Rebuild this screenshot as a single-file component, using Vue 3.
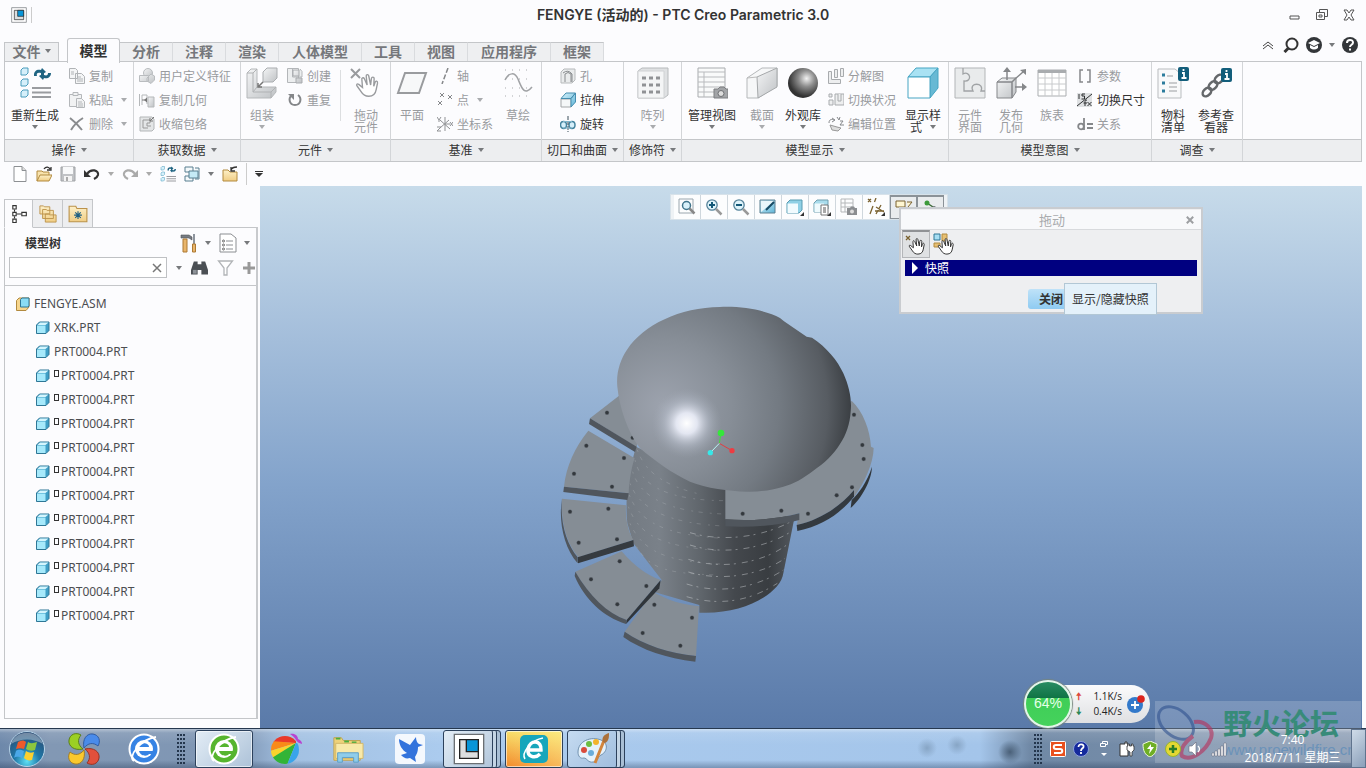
<template>
  <div class="app">
    <svg class="sprite" aria-hidden="true">
      <defs>
        <linearGradient id="g-cube" x1="0" y1="0" x2="1" y2="1"><stop offset="0" stop-color="#d8f3fc" /><stop offset="1" stop-color="#5fb4d6" /></linearGradient>
        <linearGradient id="g-gray" x1="0" y1="0" x2="1" y2="1"><stop offset="0" stop-color="#f4f5f6" /><stop offset="1" stop-color="#bfc2c5" /></linearGradient>
        <linearGradient id="g-folder" x1="0" y1="0" x2="0" y2="1"><stop offset="0" stop-color="#fdf0c8" /><stop offset="1" stop-color="#f0cd84" /></linearGradient>
        <radialGradient id="g-ball" cx=".62" cy=".35" r=".6"><stop offset="0" stop-color="#f2f2f2" /><stop offset=".45" stop-color="#8d8d8d" /><stop offset="1" stop-color="#333" /></radialGradient>
        <radialGradient id="g-orb" cx=".5" cy=".85" r=".8"><stop offset="0" stop-color="#5fe0f5" /><stop offset=".45" stop-color="#1f78a8" /><stop offset="1" stop-color="#2a4d75" /></radialGradient>
        <clipPath id="c-round"><circle cx="15" cy="17" r="14" /></clipPath>
      </defs>
      <symbol id="hand" viewBox="0 0 20 20"><path d="M6 12 3 9.500C1.500 8.500 .8 9.800 1.800 11L5 15.500C6.500 18 8.500 19 11 19c4 0 5.500-2.500 6-5.500l1-5c.3-1.800-1.500-2.200-2-.5l-1 3 .3-6c0-1.800-2-1.800-2.200 0L12.500 10 11 2.800c-.4-1.700-2.300-1.300-2 .4L9.700 10 7.500 5C6.800 3.500 5 4.200 5.500 5.800z" fill="#fff" stroke="currentColor" stroke-width="1.100" /></symbol>
      <symbol id="regen" viewBox="0 0 32 32">
        <g fill="#d5effa" stroke="#4b9cbc"><path d="M2 3l2-2h5v5l-2 2H2zM2 14l2-2h5v5l-2 2H2zM2 25l2-2h5v5l-2 2H2z" /></g>
        <path d="M13 21h19M13 25.500h19M13 30h19" stroke="#9a9ca0" stroke-width="2" />
        <path d="M15 8c0-4 3-6 7-5l1-2 4 4-5 3V6c-3-1-5 0-4 3h-3zM32 6c0 4-3 6-7 5l-1 2-4-4 5-3v2c3 1 4 0 4-2z" fill="#1f6482" />
      </symbol>
      <symbol id="copy" viewBox="0 0 16 16"><g fill="#f4f5f6" stroke="#b0b3b6"><path d="M.5.500h6l2 2v8h-8zM6.500 5.500h6l3 3v7h-9z" /><path d="M2 4h3M2 6h3M8 9h4M8 11h6M8 13h6" /></g></symbol>
      <symbol id="paste" viewBox="0 0 16 16"><g fill="#f1f2f3" stroke="#b4b7ba"><path d="M.5 2.500h12v12H.5z" /><path d="M4 .5h5v3H4zM7.500 6.500h5l3 3v6h-8z" /><path d="M9 10h4M9 12h5M9 14h5" /></g></symbol>
      <symbol id="delete" viewBox="0 0 16 16"><path d="M1 2c4 3 8 7 12 12M14 2C9 5 5 9 2 14" stroke="#8a8c8f" stroke-width="2" fill="none" /></symbol>
      <symbol id="udf" viewBox="0 0 16 16"><g fill="url(#g-gray)" stroke="#b9bcbf"><circle cx="9" cy="5" r="4.500" /><path d="M.5 7.500h9v6h-9zM8 10l4-4 3.500 2v4L12 15.500 8 13z" /></g></symbol>
      <symbol id="copygeom" viewBox="0 0 16 16"><path d="M9 5h6v10H9z" fill="url(#g-gray)" stroke="#b5b8ba" /><path d="M.5 2v12M3 13V3h5v9" fill="none" stroke="#b5b8ba" /><path d="M3 8h5" stroke="#777" /><path d="M8 5.500v5L5 8z" fill="#777" /></symbol>
      <symbol id="shrink" viewBox="0 0 16 16"><path d="M1 1h12l2 2v10l-2 2H1z" fill="#e4e6e7" stroke="#b3b6b8" /><path d="M4 4h7v3H8v3h4M4 4v8h5" fill="none" stroke="#999" /><path d="M15 1 11 5m0-3v3h3" stroke="#777" fill="none" /></symbol>
      <symbol id="assemble" viewBox="0 0 32 32"><path d="M1 6l4-4h6v18h19v5l-5 6H1z" fill="url(#g-gray)" stroke="#b5b8ba" /><path d="M1 6h6v19h18v6M7 6l4-4M25 25l5-5M7 25l4-5" fill="none" stroke="#b0b2b4" /><path d="M17 5l4-4h10v10l-4 4H17z" fill="url(#g-gray)" stroke="#aaadb0" /><path d="M17 15l-5 5m0-4v4h4" stroke="#777" fill="none" stroke-width="1.500" /></symbol>
      <symbol id="create" viewBox="0 0 16 16"><path d="M.5.500h11v14H.5zM5.500.500V9H15V3.500l-2-2.500" fill="#eceeef" stroke="#b3b6b9" /><path d="M6 2h6v6H6zM9 10h6v5H9z" fill="url(#g-gray)" stroke="#a8abae" /></symbol>
      <symbol id="repeat" viewBox="0 0 16 16"><path d="M5 3C1 6 2 13 8 13s7-7 3-10" fill="none" stroke="#85878a" stroke-width="2" /><path d="M1 2h6v6z" fill="#85878a" /></symbol>
      <symbol id="drag" viewBox="0 0 32 32"><path d="M1 2l9 9M10 2 1 11" stroke="#999b9e" stroke-width="2" /><svg x="5" y="5" width="25" height="26" color="#999b9e"><use href="#hand" /></svg></symbol>
      <symbol id="plane" viewBox="0 0 32 32"><path d="M9 6h21l-7 20H2z" fill="#f7f8f9" stroke="#999b9e" stroke-width="2" /></symbol>
      <symbol id="axis" viewBox="0 0 16 16"><path d="M11 0 5 16" stroke="#85878a" stroke-width="1.500" stroke-dasharray="5 2" /></symbol>
      <symbol id="points" viewBox="0 0 16 16"><path d="M3 1l4 4m0-4L3 5M11 3l4 4m0-4-4 4M1 9l4 4m0-4-4 4" stroke="#85878a" /></symbol>
      <symbol id="csys" viewBox="0 0 16 16"><path d="M8 1v14M3 4l10 9M3 12 12 4M8 8h5M0 1l2 3 2-3M2 4v2M0 11h4l-4 4h4M13 6l3 4m0-4-3 4" stroke="#8f9194" fill="none" /></symbol>
      <symbol id="sketch" viewBox="0 0 32 32"><path d="M3 3h27M3 12h27M3 21h27M3 29h27" stroke="#a8aaad" stroke-dasharray="1 6" /><path d="M3 13C7 5 13 5 16 12s6 18 14 8" fill="none" stroke="#a0a2a5" stroke-width="1.500" /></symbol>
      <symbol id="hole" viewBox="0 0 16 16"><path d="M1 4l3-3h11v11l-3 3H1z" fill="#e9ebec" stroke="#b6b9bb" /><path d="M5 14V6q3-3 6 0v8M3 5q5-4 9 1v8" fill="none" stroke="#888b8e" /></symbol>
      <symbol id="extrude" viewBox="0 0 16 16"><path d="M1 7h10v8H1z" fill="#f5f7f8" stroke="#a3a6a8" /><path d="M1 6.500 6 1h9.500L11 6.500zM11 6.500 15.500 1v9L11 15z" fill="url(#g-cube)" stroke="#468eb0" /></symbol>
      <symbol id="revolve" viewBox="0 0 16 16"><g fill="#d5effa" stroke="#45849f" stroke-width="1.500"><ellipse cx="3.500" cy="9" rx="3" ry="3.500" /><ellipse cx="12" cy="9" rx="3" ry="3.500" /></g><path d="M8 0v16" stroke="#3b4f5a" stroke-dasharray="4 1" /><path d="M3 5.500h9M3 12h9" stroke="#7eb4ca" /></symbol>
      <symbol id="pattern" viewBox="0 0 32 32"><path d="M1 4l4-3h26v27l-4 3H1z" fill="#dfe1e3" stroke="#b7babc" /><path d="M1 4h26v27H1z" fill="#f4f5f6" stroke="#d0d2d4" /><path d="M5 11h18M5 18h18M5 25h18" stroke="#909295" stroke-width="3" stroke-dasharray="4 3" /></symbol>
      <symbol id="views" viewBox="0 0 32 32"><path d="M2 1h27v29H2z" fill="#f9fafa" stroke="#a9acaf" /><path d="M2 5h27M2 10h27M2 15h27M2 20h27M2 25h27M8 5v25" stroke="#b9bbbe" /><path d="M18 22h4l2-2h4l2 2h2v9H18z" fill="#a2a4a7" stroke="#7c7e81" /><circle cx="25" cy="26.500" r="3" fill="#ddd" stroke="#6d6f72" /></symbol>
      <symbol id="section" viewBox="0 0 32 32"><path d="M1 11 16 1h15v18L12 31H1z" fill="#f6f7f8" stroke="#b5b8ba" /><path d="M11 10 31 1v19L12 31z" fill="url(#g-gray)" stroke="#a5a8aa" /><path d="M1 11l10-1" stroke="#bbb" /></symbol>
      <symbol id="ball" viewBox="0 0 32 32"><circle cx="16" cy="16" r="15" fill="url(#g-ball)" /></symbol>
      <symbol id="explode" viewBox="0 0 16 16"><g fill="#edeeef" stroke="#a8abae"><path d="M.5 3.500h3v8h9v4H.5zM6.500 1.500h3v8h-3zM12.500.500h3v8h-3z" /></g></symbol>
      <symbol id="state" viewBox="0 0 16 16"><g fill="#edeeef" stroke="#a8abae"><path d="M1 2h3v3H1zM1 8h4v5H1zM7 2h9v11H7z" /><path d="M10 2v7h3V2" /></g></symbol>
      <symbol id="editpos" viewBox="0 0 16 16"><path d="M1 7c0-4 3-4 5-3M4 2l3 2-3 2M9 1l2 3 1-3M12 5h3l-3 4h4" stroke="#85878a" fill="none" /><path d="M2 9l7 2 4 1-3 3-6-1z" fill="#ddd" stroke="#999" /></symbol>
      <symbol id="display" viewBox="0 0 32 32"><path d="M1 10 9 1h22l-8 9z" fill="#a9e2f3" stroke="#46a5c3" /><path d="M23 10l8-9v20l-8 10z" fill="#67b9d4" stroke="#46a5c3" /><path d="M1 10h22v21H1z" fill="#fff" stroke="#46a5c3" /></symbol>
      <symbol id="interface" viewBox="0 0 32 32"><path d="M1 1h30v30H1z" fill="#e9ebec" stroke="#b2b5b7" /><path d="M9 1v6c7-4 10 8 1 7v10h9c-5-9 12-9 8 0h4" fill="none" stroke="#a0a3a5" stroke-width="1.300" /></symbol>
      <symbol id="publish" viewBox="0 0 32 32"><path d="M2 15l5-4h14v14l-4 6H2z" fill="url(#g-gray)" stroke="#85878a" /><path d="M2 15h15v16M17 15l4-4M12 13V3M20 12l8-7M20 20h8" fill="none" stroke="#85878a" stroke-width="1.500" /><path d="M12 0l4 5H8zM31 2v6l-6-5zM32 20l-5-4v8z" fill="#85878a" /></symbol>
      <symbol id="family" viewBox="0 0 32 32"><path d="M2 3h28v26H2z" fill="#fff" stroke="#aaadb0" /><path d="M2 3h28v3H2z" fill="#a9acaf" /><path d="M2 11h28M2 17h28M2 23h28M9 6v23M16 6v23M23 6v23" stroke="#c8cacc" /></symbol>
      <symbol id="params" viewBox="0 0 16 16"><path d="M6 2H3v12h3M10 2h3v12h-3" fill="none" stroke="#85878a" stroke-width="1.500" /></symbol>
      <symbol id="dims" viewBox="0 0 16 16"><path d="M0 1h15v14H0z" fill="#dfe1e3" /><path d="M2 2v5M8 2H5v2h2.500v3H4.500M0 14 15 2M8 14V9.500q0-1.500 2-1.500M6.500 11H10M10.500 10l4 4m0-4-4 4" fill="none" stroke="#2d2f31" /></symbol>
      <symbol id="relation" viewBox="0 0 16 16"><path d="M7 2v12M10 8h6M10 12h6" fill="none" stroke="#85878a" stroke-width="1.800" /><circle cx="4" cy="10.500" r="2.800" fill="none" stroke="#85878a" stroke-width="1.800" /></symbol>
      <symbol id="bom" viewBox="0 0 32 32"><path d="M1 2h17l6 5v24H1z" fill="#f8f9fa" stroke="#b9bcbf" /><path d="M5 8h3M5 16h3M5 24h3" stroke="#2b7c9d" stroke-width="3" /><path d="M10 9h6M12 16h8M12 20h8M12 24h8" stroke="#9a9da0" /><rect x="21" width="11" height="14" rx="2" fill="#135e7b" /><path d="M26.500 2v2M25 6h2v5M24.500 11h5" stroke="#fff" stroke-width="1.800" fill="none" /></symbol>
      <symbol id="chain" viewBox="0 0 32 32"><g fill="none" stroke="#65686b" stroke-width="2.500"><ellipse cx="7" cy="25" rx="5" ry="3.500" transform="rotate(-45 7 25)" /><ellipse cx="13" cy="18.500" rx="5" ry="3.500" transform="rotate(-45 13 18.500)" /><ellipse cx="19" cy="12" rx="5" ry="3.500" transform="rotate(-45 19 12)" /></g><rect x="21" y="1" width="11" height="14" rx="2" fill="#135e7b" /><path d="M26.500 3v2M25 7h2v5M24.500 12h5" stroke="#fff" stroke-width="1.800" fill="none" /></symbol>
      <symbol id="new" viewBox="0 0 16 16"><path d="M2 .5h8l4 4v11H2z" fill="#fff" stroke="#8d9093" /><path d="M10 .5v4h4" fill="#ddd" stroke="#8d9093" /></symbol>
      <symbol id="open" viewBox="0 0 16 16"><path d="M1 15V5h5l1 1h6v3" fill="#f8e3ad" stroke="#b28a3f" /><path d="M1 15l3-6h12l-3 6z" fill="url(#g-folder)" stroke="#b28a3f" /><path d="M8 3c2-3 5-2 6 0m1-2v3h-4" fill="none" stroke="#333" stroke-width="1.300" /></symbol>
      <symbol id="save" viewBox="0 0 16 16"><path d="M1 1h14v14H1z" fill="#c0c2c5" stroke="#a0a3a6" /><path d="M3 1h10v7H3z" fill="#f8f9fa" /><path d="M4 10h8v5H4z" fill="#f4f4f4" /><path d="M6 11h2v4H6z" fill="#aaa" /></symbol>
      <symbol id="undo" viewBox="0 0 16 16"><path d="M3 8c4-6 12-4 11 1-.5 2-2 3-4 4" fill="none" stroke="currentColor" stroke-width="2.200" /><path d="M0 4v7h7z" fill="currentColor" /></symbol>
      <symbol id="windows" viewBox="0 0 16 16"><g fill="#f4f9fb" stroke="#587f90"><path d="M1 1h8v5H1zM1 10h8v5H1zM11 2h4v11h-4" /><path d="M5 5h9v7H5z" fill="#c5eaf6" /></g></symbol>
      <symbol id="closewin" viewBox="0 0 16 16"><path d="M1 15V4h5l2 2h7v9z" fill="url(#g-folder)" stroke="#b28a3f" /><path d="M9 4c1-3 4-3 6-3M9 1v4h4" fill="none" stroke="#333" stroke-width="1.300" /></symbol>
      <symbol id="treeicon" viewBox="0 0 16 16"><g fill="#fff" stroke="#333"><path d="M4 4v2M4 10v2M6 8h4" /><path d="M2.500 .5h3v3h-3zM2.500 6.500h3v3h-3zM2.500 12.500h3v3h-3zM10.500 6.500h4v3h-4z" /></g></symbol>
      <symbol id="folders" viewBox="0 0 20 20"><g fill="url(#g-folder)" stroke="#bb924a"><path d="M1 10V1h4l1 1h6v8zM4 15V5h4l1 1h7v9zM7 19v-9h4l1 1h7v8z" /></g></symbol>
      <symbol id="favs" viewBox="0 0 18 16"><path d="M1 15V1h6l1 2h9v12z" fill="url(#g-folder)" stroke="#bb924a" /><path d="M9 5.500v7M5.500 9h7M6.500 6.500l5 5M11.500 6.500l-5 5" stroke="#1d5f83" /></symbol>
      <symbol id="tools" viewBox="0 0 18 20"><path d="M1 2h8l3 2v3l-3-2H1z" fill="#777c82" stroke="#4d5157" stroke-width=".6" /><path d="M3 6h4v13H3z" fill="#e9b56b" stroke="#ac7933" /><path d="M14 1v11" stroke="#68727c" stroke-width="1.500" /><path d="M12.500 11h3v8h-3z" fill="#e9b56b" stroke="#ac7933" /></symbol>
      <symbol id="listset" viewBox="0 0 18 20"><path d="M1 1h11l5 4v14H1z" fill="#fff" stroke="#8b8e92" /><path d="M7 8h7M7 12h7M7 16h7" stroke="#8b8e92" /><g fill="none" stroke="#666"><circle cx="4.500" cy="8" r="1" /><circle cx="4.500" cy="12" r="1" /><circle cx="4.500" cy="16" r="1" /></g></symbol>
      <symbol id="binoc" viewBox="0 0 18 16"><path d="M3 1h4v3h4V1h4l3 9v5h-7v-5H7v5H0v-5z" fill="#4b4f54" /><path d="M2 10h4v4H2z" fill="#8d9298" /></symbol>
      <symbol id="filter" viewBox="0 0 16 16"><path d="M1 1h14L9.500 8v7h-3V8z" fill="#fff" stroke="#b1b4b7" stroke-width="1.300" /></symbol>
      <symbol id="part" viewBox="0 0 14 14"><path d="M.5 4l3-3h9.500v8.500l-3 3H.5z" fill="#3f9fc6" stroke="#2f7796" /><path d="M1 4.500h8.500V12H1z" fill="#a6e9fb" /><path d="M1.500 4 4 1.500h8.500L9.500 4z" fill="#d4f5fd" /></symbol>
      <symbol id="asm" viewBox="0 0 14 14"><path d="M.5 3.500 3 1h10v9l-3 3.500H.5z" fill="#f7d68d" stroke="#b28a3f" /><path d="M4.500 2.500 6 1h7v8l-1 1H4.500z" fill="#8adcf4" stroke="#2f7796" /></symbol>
      <symbol id="zoomfit" viewBox="0 0 18 18"><path d="M1 1h14v14H1z" fill="none" stroke="#9aa6ae" /><circle cx="8.500" cy="7.500" r="4" fill="#d9f1fa" stroke="#41758c" stroke-width="1.500" /><path d="M11.500 10.500l5 5" stroke="#888" stroke-width="2.500" /></symbol>
      <symbol id="zoomin" viewBox="0 0 18 18"><circle cx="7" cy="7" r="5.200" fill="#dff4fb" stroke="#56839a" stroke-width="1.300" /><path d="M4 7h6M7 4v6" stroke="#125878" stroke-width="2" /><path d="M11 11l5.500 5.500" stroke="#999" stroke-width="2.500" /></symbol>
      <symbol id="zoomout" viewBox="0 0 18 18"><circle cx="7" cy="7" r="5.200" fill="#dff4fb" stroke="#56839a" stroke-width="1.300" /><path d="M4 7h6" stroke="#125878" stroke-width="2" /><path d="M11 11l5.500 5.500" stroke="#999" stroke-width="2.500" /></symbol>
      <symbol id="repaint" viewBox="0 0 18 18"><path d="M1 2h15v13H1z" fill="url(#g-cube)" stroke="#5b7f90" /><path d="M2 14V3h13z" fill="#e9f6fa" /><path d="M7 12l8-8" stroke="#174a63" stroke-width="2" /></symbol>
      <symbol id="shade" viewBox="0 0 18 18"><path d="M1 5l3-3h12v10l-3 3H1z" fill="#8fd0e5" stroke="#579ab0" /><path d="M1.500 5.500H12V15H1.500z" fill="#f1fbfe" /><path d="M18 14v4h-4z" fill="#333" /></symbol>
      <symbol id="saved" viewBox="0 0 18 18"><path d="M1 5l3-3h11v9l-3 3H1z" fill="#a9dcec" stroke="#6f9fb0" /><path d="M1.500 5.500H11V14H1.500z" fill="#eefafd" /><path d="M8 7h7v10H8z" fill="#fff" stroke="#777" /><path d="M10 10h3M10 12h3M10 14h3" stroke="#555" /><path d="M18 14v4h-4z" fill="#333" /></symbol>
      <symbol id="snap" viewBox="0 0 18 18"><path d="M1 1h12v13H1zM1 5h12M1 9h12M5 1v13" fill="none" stroke="#b5b8ba" /><path d="M7 10h3l1-1.500h3L15 10h2v7H7z" fill="#8b8e91" /><circle cx="12" cy="13.500" r="2" fill="#ddd" /></symbol>
      <symbol id="datum" viewBox="0 0 18 18"><path d="M1 1l3 3m0-3L1 4M9 0 7.500 4M6 8 3 16M14 7l-5 9M9 9l8 5M8 13h9" stroke="#7a6230" stroke-width="1.300" /><path d="M18 14v4h-4z" fill="#333" /></symbol>
      <symbol id="annot" viewBox="0 0 18 18"><path d="M1 2h9v6H1zM12 3h5l-4 5" fill="#fff7d2" stroke="#7a6230" /></symbol>
      <symbol id="spin" viewBox="0 0 18 18"><path d="M5 4l6 4" stroke="#3b6b37" stroke-width="1.500" /><circle cx="5" cy="4" r="2.500" fill="#3c9a3b" /><circle cx="12" cy="9" r="2" fill="#6c7377" /></symbol>
      <symbol id="creo" viewBox="0 0 24 24"><path d="M1 1h22v22H1z" fill="#fff" stroke="#6b6f73" /><path d="M5 5h14v14H5z" fill="#dcdedf" stroke="#222" /><path d="M10 5h9v9h-9z" fill="#0895d8" stroke="#222" /></symbol>
      <symbol id="clover" viewBox="0 0 32 32">
        <path id="petal" d="M15 16C6 18 0 13 1 7 2 1 8-1 13 2 9 7 10 12 15 16z" fill="#9bcf24" stroke="#5c7f1c" />
        <path d="M15 16C6 18 0 13 1 7 2 1 8-1 13 2 9 7 10 12 15 16z" transform="rotate(90 16 16)" fill="#4a8bea" stroke="#315ca2" />
        <path d="M15 16C6 18 0 13 1 7 2 1 8-1 13 2 9 7 10 12 15 16z" transform="rotate(180 16 16)" fill="#e2503c" stroke="#993425" />
        <path d="M15 16C6 18 0 13 1 7 2 1 8-1 13 2 9 7 10 12 15 16z" transform="rotate(270 16 16)" fill="#fbc82d" stroke="#a17d2b" />
      </symbol>
      <symbol id="ie" viewBox="0 0 32 32"><circle cx="16" cy="16" r="14.500" fill="currentColor" stroke="#fff" stroke-width="2" /><circle cx="16" cy="16" r="9" fill="#fff" /><path d="M11 14c0-5 10-5 10 0zM11 18h15v3h-5c-2 3-9 2-10-3z" fill="currentColor" /><path d="M6 28C-1 24 13 6 28 4" fill="none" stroke="#fff" stroke-width="1.800" /></symbol>
      <symbol id="rainbow" viewBox="0 0 32 32">
        <g clip-path="url(#c-round)"><path d="M26 10 0 9V0h26z" fill="#e9392a" /><path d="M26 10 0 8v10z" fill="#f98a18" /><path d="M26 10 0 18v9z" fill="#fbd32c" /><path d="M26 10 0 26v6h17z" fill="#33b437" /><path d="M26 10 17 32h15V10z" fill="#3aa4ea" /></g>
        <path d="M20 1c5-1 8 2 8 5 3 1 4 3 4 5-3-1-5-2-6-4s-3-4-6-6z" fill="#b943d1" />
      </symbol>
      <symbol id="explorer" viewBox="0 0 34 32"><path d="M2 28V4h8l2 3h18v21z" fill="#eed27a" stroke="#bfa150" /><path d="M4 5h5M13 8h5M21 9h5" stroke="#4cae3e" stroke-width="2" /><path d="M4 10h29v16H4z" fill="#f8e9a9" stroke="#d2b666" /><path d="M6 30V20h22v10h-5v-5H11v5z" fill="#8fcdea" stroke="#5b9dc5" /></symbol>
      <symbol id="bird" viewBox="0 0 32 32"><rect x="1" y="1" width="30" height="30" rx="4" fill="#f4f8fd" /><path d="M5 6l11 6 6-8c0 3 1 6 3 7l4 1-5 2c0 6-2 8-3 10l1 5-6-4c-4 1-6 0-9-3l6-2C8 17 5 12 5 6z" fill="#3373dc" /></symbol>
      <symbol id="e360" viewBox="0 0 32 32"><rect x="2" y="2" width="28" height="28" rx="5" fill="#16a6bb" /><path d="M10 17h13c1-10-11-11-13-1-1 8 7 10 12 5" fill="none" stroke="#fff" stroke-width="3.500" /><path d="M7 26C3 20 13 7 25 5" fill="none" stroke="#fff" stroke-width="1.500" /></symbol>
      <symbol id="paint" viewBox="0 0 32 32"><path d="M1 19C1 8 14 3 24 7c9 4 5 13 0 15-4 2-3 7-8 7-5 1-6-4-9-4-4 1-6-2-6-6z" fill="#e6f2fb" stroke="#7191ae" /><circle cx="7" cy="17" r="3" fill="#d94b3c" /><circle cx="12" cy="11" r="3" fill="#6dbd42" /><circle cx="19" cy="9" r="3" fill="#f3b42c" /><circle cx="14" cy="20" r="3" fill="#6badd9" /><path d="M28 5 18 30" stroke="#d2853d" stroke-width="3" /><path d="M26 9c-2-5 2-8 6-9 0 4 0 8-4 10z" fill="#ab713c" /></symbol>
    </svg>

    <header class="titlebar">
      <div class="title-left"><svg class="icon"><use href="#creo" /></svg></div>
      <h1>FENGYE (活动的) - PTC Creo Parametric 3.0</h1>
      <div class="window-buttons">
        <button aria-label="最小化"><svg viewBox="0 0 12 12"><path d="M1 7h9v3H1z" /></svg></button>
        <button aria-label="还原"><svg viewBox="0 0 12 12"><path d="M3.500 3V.5h8v7H9M.5 3.500h8v7h-8zM3 6h3v2H3z" /></svg></button>
        <button aria-label="关闭窗口"><svg viewBox="0 0 12 12"><path d="M1 1h3l2 3 2-3h3L8 6l3 5H8L6 8l-2 3H1l3-5z" /></svg></button>
      </div>
    </header>

    <nav class="tabs">
      <button class="tab file">文件<i class="arrow"></i></button>
      <button v-for="tab in tabs" :key="tab" class="tab" :class="{ active: tab === activeTab, wide: tab.length > 2 }" @click="activeTab = tab">{{ tab }}</button>
      <div class="help">
        <button aria-label="折叠功能区"><svg viewBox="0 0 16 16"><path d="M3 9l5-4 5 4M3 12l5-4 5 4" fill="none" stroke="#444" /></svg></button>
        <button aria-label="搜索"><svg viewBox="0 0 16 16"><circle cx="9" cy="7" r="5.500" fill="none" stroke="#333" stroke-width="2" /><path d="M5.500 11 1.500 15" stroke="#333" stroke-width="3" /></svg></button>
        <button class="learn" aria-label="学习"><svg viewBox="0 0 16 16"><circle cx="8" cy="8" r="8" fill="#333639" /><path d="M2 6l6-3 6 3-6 3zM4 8v3q4 3 8 0V8L8 10z" fill="#fff" /></svg><i class="arrow"></i></button>
        <button aria-label="帮助"><svg viewBox="0 0 16 16"><circle cx="8" cy="8" r="8" fill="#333639" /><path d="M5 6c0-4 6-4 6-.5C11 8 8 7.500 8 10M8 11.500v2" fill="none" stroke="#fff" stroke-width="2" /></svg></button>
      </div>
    </nav>

    <section class="ribbon">
      <div v-for="group in groups" :key="group.name" class="group" :class="group.id">
        <div class="group-body">
          <template v-for="(block, i) in group.blocks" :key="i">
            <div v-if="block.rows" class="stack">
              <button v-for="row in block.rows" :key="row.text" class="small" :disabled="!row.on">
                <svg class="icon"><use :href="'#' + row.icon" /></svg>{{ row.text }}<i v-if="row.menu" class="arrow"></i>
              </button>
            </div>
            <span v-else-if="block.line" class="divider"></span>
            <button v-else class="large" :class="block.size" :disabled="!block.on">
              <svg><use :href="'#' + block.icon" /></svg>
              <span v-for="line in block.text" :key="line">{{ line }}<i v-if="block.inline && line === block.text[1]" class="arrow"></i></span>
              <i v-if="block.menu" class="arrow"></i>
            </button>
          </template>
        </div>
        <button class="group-name">{{ group.name }}<i class="arrow"></i></button>
      </div>
      <div class="group rest"><div class="group-body"></div><div class="group-name"></div></div>
    </section>

    <div class="quickbar">
      <button aria-label="新建"><svg class="icon"><use href="#new" /></svg></button>
      <button aria-label="打开"><svg class="icon"><use href="#open" /></svg></button>
      <button aria-label="保存"><svg class="icon"><use href="#save" /></svg></button>
      <button aria-label="撤消"><svg class="icon"><use href="#undo" /></svg></button>
      <i class="arrow pale"></i>
      <button class="redo" aria-label="重做"><svg class="icon"><use href="#undo" /></svg></button>
      <i class="arrow pale"></i>
      <button aria-label="重新生成"><svg class="icon"><use href="#regen" /></svg></button>
      <button aria-label="窗口"><svg class="icon"><use href="#windows" /></svg></button>
      <i class="arrow"></i>
      <button aria-label="关闭"><svg class="icon"><use href="#closewin" /></svg></button>
      <span class="quick-sep"></span>
      <button class="customize" aria-label="自定义快速访问工具栏"><i class="arrow"></i></button>
    </div>

    <main class="work">
      <aside class="side">
        <div class="side-tabs">
          <button class="current" aria-label="模型树"><svg><use href="#treeicon" /></svg></button>
          <button aria-label="文件夹浏览器"><svg><use href="#folders" /></svg></button>
          <button aria-label="收藏夹"><svg><use href="#favs" /></svg></button>
        </div>
        <div class="panel">
          <div class="panel-head">
            <div class="head-row">
              <h2>模型树</h2>
              <button aria-label="设置"><svg><use href="#tools" /></svg><i class="arrow"></i></button>
              <button aria-label="显示"><svg><use href="#listset" /></svg><i class="arrow"></i></button>
            </div>
            <div class="head-row search-row">
              <div class="search">
                <input v-model="query" type="text" aria-label="搜索模型树">
                <button aria-label="清除" @click="query = ''"><svg viewBox="0 0 10 10"><path d="M1 1l8 8M9 1 1 9" stroke="#777" stroke-width="1.500" /></svg></button>
              </div>
              <i class="arrow"></i>
              <button aria-label="查找"><svg><use href="#binoc" /></svg></button>
              <button aria-label="过滤"><svg><use href="#filter" /></svg></button>
              <button aria-label="添加"><svg class="plus" viewBox="0 0 12 12"><path d="M6 0v12M0 6h12" stroke="#999" stroke-width="3" /></svg></button>
            </div>
          </div>
          <ul class="tree">
            <li class="root"><svg><use href="#asm" /></svg>FENGYE.ASM</li>
            <li v-for="(part, i) in parts" :key="i"><svg><use href="#part" /></svg><i v-if="part.packed" class="packed"></i>{{ part.name }}</li>
          </ul>
        </div>
      </aside>

      <section class="viewport">
        <svg class="model" viewBox="0 0 1050 1140" role="img" aria-label="FENGYE">
          <defs>
            <linearGradient id="m-body" gradientUnits="userSpaceOnUse" x1="258" y1="0" x2="760" y2="0"><stop offset="0" stop-color="#737a82" /><stop offset=".2" stop-color="#7a8189" /><stop offset=".45" stop-color="#5f656b" /><stop offset=".65" stop-color="#44484d" /><stop offset=".85" stop-color="#393d41" /><stop offset="1" stop-color="#52575d" /></linearGradient>
            <radialGradient id="m-dome" gradientUnits="userSpaceOnUse" cx="370" cy="350" r="580"><stop offset="0" stop-color="#9da3ae" /><stop offset=".35" stop-color="#878e97" /><stop offset=".6" stop-color="#737a82" /><stop offset=".85" stop-color="#575c62" /><stop offset="1" stop-color="#34383c" /></radialGradient>
            <radialGradient id="m-shine" gradientUnits="userSpaceOnUse" cx="440" cy="400" r="105"><stop offset="0" stop-color="#fff" /><stop offset=".3" stop-color="#eceffa" stop-opacity=".9" /><stop offset=".65" stop-color="#bcc3d0" stop-opacity=".45" /><stop offset="1" stop-color="#a0a7b2" stop-opacity="0" /></radialGradient>
          </defs>
          <path d="M288 470C262 560 255 640 262 700L280 760 365 870 340 905 478 945V968C610 975 722 910 730 850L762 690 560 590Z" fill="url(#m-body)" />
          <g fill="none" stroke="#d9dcdf" stroke-width="2">
            <g opacity=".65" stroke-dasharray="18 12 6 18">
              <path d="M450 728C560 760 680 735 752 695" /><path d="M450 765C560 800 680 770 748 728" /><path d="M445 808C560 845 680 810 740 765" /><path d="M445 846C560 880 680 845 735 805" /><path d="M440 882C560 920 670 880 730 840" /><path d="M440 920C560 955 650 920 712 880" />
            </g>
            <g opacity=".3" stroke-dasharray="6 16 12 22">
              <path d="M292 480C310 530 350 580 470 610" /><path d="M285 510C300 580 370 630 550 632" /><path d="M278 545C300 620 380 665 550 672" /><path d="M270 580C300 660 390 700 550 708" /><path d="M268 615C300 700 380 735 550 745" /><path d="M265 650C300 745 380 770 540 782" /><path d="M270 700C310 790 390 815 540 822" /><path d="M290 770C330 840 390 850 530 855" />
            </g>
          </g>
          <g fill="#858d95">
            <path d="M240 315 150 385 290 472 300 420Z" />
            <path d="M145 422C105 470 78 530 72 590L266 610C268 570 275 530 284 505Z" />
            <path d="M66 626C62 700 80 760 115 802L280 750C262 720 256 680 258 646Z" />
            <path d="M106 845 245 784C285 830 320 855 362 870L260 990C200 970 150 920 106 845Z" />
            <path d="M340 905C380 930 430 945 477 948L468 1098C390 1090 310 1065 254 1025Z" />
            <path d="M556 590V688C640 695 720 685 778 670L770 705C840 690 900 650 942 600L942 622C975 575 1000 520 1001 474L993 470C990 420 970 365 935 332L850 450Z" />
          </g>
          <g fill="#50565d">
            <path d="M150 385 290 470 285 486 147 402Z" /><path d="M72 590 266 610 262 630 70 606Z" /><path d="M113 802 280 750 282 769 114 820Z" fill="#363b40" /><path d="M260 990 362 870 358 895 258 1002Z" fill="#30353a" /><path d="M66 626C60 700 80 762 113 802V820C70 770 55 690 66 626Z" /><path d="M106 845C150 920 200 968 260 990L258 1002C190 980 135 930 104 858Z" /><path d="M254 1025C310 1065 390 1090 468 1098L466 1115C380 1105 305 1080 250 1041Z" />
            <path d="M556 688C640 695 720 685 778 670V690C720 705 640 714 556 709Z" /><path d="M770 705C840 690 900 650 942 600V620C900 670 850 707 772 723Z" fill="#343a40" /><path d="M996 530C980 580 955 610 935 630L932 654C965 625 995 570 996 530Z" fill="#30363b" />
          </g>
          <g fill="#33383d" stroke="#697078"><circle v-for="hole in holes" :key="hole[0]" :cx="hole[0]" :cy="hole[1]" r="6" /></g>
          <path d="M232 290C228 250 240 210 262 178C310 105 420 52 540 51C610 48 680 62 720 84L732 94 800 140 816 143C860 172 893 212 910 250C928 290 936 330 932 365C930 400 918 435 900 462C880 495 852 520 820 542C790 565 760 582 730 590C690 602 655 606 620 605C565 603 500 595 450 575C395 550 345 512 300 475C262 425 238 350 232 290Z" fill="url(#m-dome)" />
          <circle cx="440" cy="400" r="105" fill="url(#m-shine)" />
          <path d="M538 460 543 430" stroke="#3fdd3f" stroke-width="3" /><path d="M538 460 576 482" stroke="#e43c41" stroke-width="3" /><path d="M538 460 511 488" stroke="#b9f6f5" stroke-width="3" />
          <circle cx="543" cy="429" r="10" fill="#35e83a" /><circle cx="576" cy="482" r="8" fill="#ed3c42" /><circle cx="511" cy="488" r="8" fill="#35e9e9" />
        </svg>

        <div class="viewbar">
          <button v-for="item in viewTools" :key="item.icon" :aria-label="item.label" :class="{ pressed: item.pressed }"><svg><use :href="'#' + item.icon" /></svg></button>
        </div>

        <div class="dialog" role="dialog" aria-labelledby="drag-title">
          <div class="dialog-title"><span id="drag-title">拖动</span><button aria-label="关闭拖动"><svg viewBox="0 0 10 10"><path d="M1 1l8 8M9 1 1 9" stroke="#9d9fa2" stroke-width="2.500" /></svg></button></div>
          <div class="dialog-tools">
            <button class="pressed" aria-label="点拖动"><svg viewBox="0 0 22 22"><path d="M1 2l4 4m0-4L1 6" stroke="#7a6230" stroke-width="1.300" /><svg x="3" y="3" width="18" height="18"><use href="#hand" /></svg></svg></button>
            <button aria-label="主体拖动"><svg viewBox="0 0 22 22"><path d="M1 1h6v6H1z" fill="#a6def3" stroke="#2f7796" /><path d="M9 1h5v7H9zM1 10h6v4H1z" fill="#e6bf72" stroke="#b28a3f" /><svg x="4" y="4" width="18" height="18"><use href="#hand" /></svg></svg></button>
          </div>
          <button class="snapshots"><i></i>快照</button>
          <div class="dialog-foot"><button>关闭</button></div>
          <div class="tooltip" role="tooltip">显示/隐藏快照</div>
        </div>
      </section>
    </main>

    <footer class="taskbar">
      <button class="start" aria-label="开始"><svg viewBox="0 0 38 38"><circle cx="19" cy="19" r="17.500" fill="url(#g-orb)" stroke="#b9d4e8" /><path d="M10 12c3-2 6-2 8 0l-2 7c-3-1-5-1-8 0z" fill="#ee5a2b" /><path d="M20 12c3 2 6 1 9 0l-2 8c-3 1-6 1-9-1z" fill="#8cc63f" /><path d="M8 21c3-2 5-1 8 0l-2 7c-3-1-5-2-8 0z" fill="#4ba8e8" /><path d="M18 21c3 2 5 2 8 1l-2 8c-3 1-6 0-8-2z" fill="#fcd02f" /><path d="M3 14C8-1 30-1 35 14 25 8 13 8 3 14z" fill="#fff" opacity=".35" /></svg></button>
      <button class="pin" aria-label="四叶草"><svg><use href="#clover" /></svg></button>
      <button class="pin blue" aria-label="浏览器"><svg><use href="#ie" /></svg></button>
      <span class="grip"></span>
      <div class="tasks">
        <button v-for="task in tasks" :key="task.icon" :aria-label="task.label" :class="task.look"><svg><use :href="'#' + task.icon" /></svg></button>
      </div>
      <div class="tray">
        <span class="grip"></span>
        <button aria-label="输入法"><svg viewBox="0 0 16 16"><rect x=".5" y=".5" width="15" height="15" rx="1" fill="#e9501e" stroke="#fff" /><path d="M12 4H6c-3 0-3 4 0 4h4c3 0 3 4 0 4H4" fill="none" stroke="#fff" stroke-width="2" /></svg></button>
        <button aria-label="帮助中心"><svg viewBox="0 0 16 16"><circle cx="8" cy="8" r="7.500" fill="#152a9c" stroke="#8ca0db" /><path d="M5.500 6c0-4 6-3 5 0-1 2-2.500 1.500-2.500 4M8 11v2" fill="none" stroke="#fff" stroke-width="1.800" /></svg></button>
        <button aria-label="语言选项"><svg viewBox="0 0 16 16"><path d="M6.500 2.500v-2h5v3h-2M4.500 2.500h5v3h-5z" fill="none" stroke="#fff" /><path d="M5 12h6l-3 3z" fill="#fff" /></svg></button>
        <button aria-label="电源"><svg viewBox="0 0 16 16"><path d="M1 3h5V1h2v2h1v12H1z" fill="#fff" stroke="#333" /><path d="M9 5V3h1.500v2h2V3H14v2h1v4l-2 2v4h-2v-4L8 9V5z" fill="#fff" stroke="#333" stroke-width=".8" /></svg></button>
        <button aria-label="安全卫士"><svg viewBox="0 0 16 16"><path d="M8 0 15 3c0 7-2 11-7 13C3 14 1 10 1 3z" fill="#6fae25" stroke="#eef7db" /><path d="M9 3 5 8h3l-1 5 5-7H9z" fill="#fff" /></svg></button>
        <button aria-label="加速球"><svg viewBox="0 0 16 16"><circle cx="8" cy="8" r="7.500" fill="#e5d833" stroke="#93b532" /><path d="M8 4v8M4 8h8" stroke="#287d28" stroke-width="2.500" /></svg></button>
        <button aria-label="音量"><svg viewBox="0 0 16 16"><path d="M1 5h3l4-4v14l-4-4H1z" fill="#fff" stroke="#667" stroke-width=".6" /><path d="M10 5q3 3 0 6" fill="none" stroke="#fff" stroke-width="1.200" /></svg></button>
        <button aria-label="网络"><svg viewBox="0 0 16 16"><path d="M1 12h2v3H1zM4 10h2v5H4zM7 8h2v7H7zM10 5h2v10h-2zM13 2h2v13h-2z" fill="#fff" stroke="#667" stroke-width=".5" /></svg></button>
        <div class="clock"><time>7:40</time><span>2018/7/11 星期三</span></div>
        <button class="desktop" aria-label="显示桌面"></button>
      </div>
    </footer>

    <div class="speed">
      <div class="ball">64%</div>
      <div class="rates">
        <div><b class="up">🠅</b><span>1.1K/s</span></div>
        <div><b class="down">🠇</b><span>0.4K/s</span></div>
      </div>
      <svg viewBox="0 0 20 20"><circle cx="9" cy="11" r="8" fill="#3379ca" /><path d="M9 7v8M5 11h8" stroke="#fff" stroke-width="1.800" /><circle cx="15" cy="5" r="3.800" fill="#dd241d" /></svg>
    </div>

    <div class="watermark">
      <svg viewBox="0 0 60 62"><g fill="none"><ellipse cx="21" cy="22" rx="20" ry="13" transform="rotate(40 21 22)" stroke="#30528f" stroke-width="3" /><path d="M39 21C50 19 59 28 56 37 51 50 36 61 27 55 24 48 31 40 38 35" stroke="#b82f5a" stroke-width="4" /></g></svg>
      <div><strong>野火论坛</strong><span>www.proewildfire.cn</span></div>
    </div>
  </div>
</template>

<script setup>
import { ref } from 'vue';

// RIBBON

const tabs = ['模型', '分析', '注释', '渲染', '人体模型', '工具', '视图', '应用程序', '框架'];
const activeTab = ref('模型');

const groups = [
  { id: 'ops', name: '操作', blocks: [
    { icon: 'regen', text: ['重新生成'], menu: true, on: true, size: 'w54' },
    { rows: [{ icon: 'copy', text: '复制' }, { icon: 'paste', text: '粘贴', menu: true }, { icon: 'delete', text: '删除', menu: true }] }
  ] },
  { id: 'data', name: '获取数据', blocks: [
    { rows: [{ icon: 'udf', text: '用户定义特征' }, { icon: 'copygeom', text: '复制几何' }, { icon: 'shrink', text: '收缩包络' }] }
  ] },
  { id: 'comp', name: '元件', blocks: [
    { icon: 'assemble', text: ['组装'], menu: true },
    { rows: [{ icon: 'create', text: '创建' }, { icon: 'repeat', text: '重复' }] },
    { line: true },
    { icon: 'drag', text: ['拖动', '元件'] }
  ] },
  { id: 'datums', name: '基准', blocks: [
    { icon: 'plane', text: ['平面'] },
    { rows: [{ icon: 'axis', text: '轴' }, { icon: 'points', text: '点', menu: true }, { icon: 'csys', text: '坐标系' }] },
    { icon: 'sketch', text: ['草绘'] }
  ] },
  { id: 'cut', name: '切口和曲面', blocks: [
    { rows: [{ icon: 'hole', text: '孔' }, { icon: 'extrude', text: '拉伸', on: true }, { icon: 'revolve', text: '旋转', on: true }] }
  ] },
  { id: 'modifier', name: '修饰符', blocks: [
    { icon: 'pattern', text: ['阵列'], menu: true }
  ] },
  { id: 'show', name: '模型显示', blocks: [
    { icon: 'views', text: ['管理视图'], menu: true, on: true, size: 'w54' },
    { icon: 'section', text: ['截面'], menu: true },
    { icon: 'ball', text: ['外观库'], menu: true, on: true },
    { rows: [{ icon: 'explode', text: '分解图' }, { icon: 'state', text: '切换状况' }, { icon: 'editpos', text: '编辑位置' }] },
    { icon: 'display', text: ['显示样', '式'], inline: true, on: true, size: 'w40' }
  ] },
  { id: 'intent', name: '模型意图', blocks: [
    { icon: 'interface', text: ['元件', '界面'] },
    { icon: 'publish', text: ['发布', '几何'] },
    { icon: 'family', text: ['族表'] },
    { rows: [{ icon: 'params', text: '参数' }, { icon: 'dims', text: '切换尺寸', on: true }, { icon: 'relation', text: '关系' }] }
  ] },
  { id: 'check', name: '调查', blocks: [
    { icon: 'bom', text: ['物料', '清单'], on: true },
    { icon: 'chain', text: ['参考查', '看器'], on: true, size: 'w40' }
  ] }
];

// MODEL TREE

const query = ref('');
const parts = [
  { name: 'XRK.PRT' },
  { name: 'PRT0004.PRT' },
  ...Array.from({ length: 11 }, () => ({ name: 'PRT0004.PRT', packed: true }))
];

// VIEWPORT

const viewTools = [
  { icon: 'zoomfit', label: '重新调整' },
  { icon: 'zoomin', label: '放大' },
  { icon: 'zoomout', label: '缩小' },
  { icon: 'repaint', label: '重画' },
  { icon: 'shade', label: '显示样式' },
  { icon: 'saved', label: '已保存方向' },
  { icon: 'snap', label: '视图管理器' },
  { icon: 'datum', label: '基准显示过滤器' },
  { icon: 'annot', label: '注释显示', pressed: true },
  { icon: 'spin', label: '旋转中心', pressed: true }
];

const holes = [
  [201, 368], [278, 443], [139, 467], [252, 504], [102, 551], [216, 590], [90, 665], [205, 656],
  [116, 758], [231, 748], [239, 814], [153, 868], [319, 888], [232, 943], [343, 944], [456, 983],
  [308, 1029], [421, 1067], [608, 671], [724, 662], [804, 671], [890, 616], [936, 592], [971, 507],
  [967, 465], [942, 374]
];

// TASKBAR

const tasks = [
  { icon: 'ie', label: '安全浏览器', look: 'open green' },
  { icon: 'rainbow', label: '影音' },
  { icon: 'explorer', label: '资源管理器' },
  { icon: 'bird', label: '迅雷' },
  { icon: 'creo', label: 'Creo Parametric', look: 'open stacked' },
  { icon: 'e360', label: '网页', look: 'open alert' },
  { icon: 'paint', label: '画图', look: 'open stacked dim' }
];
</script>

<style>
body {
  margin: 0;
  background: #fcfcfe;
}
</style>

<style scoped>
.app {
  position: relative;
  display: flex;
  flex-direction: column;
  min-height: 100vh;
  overflow: hidden;
  color: #333;
  font: 12px/16px "Noto Sans CJK SC", sans-serif;
}

.sprite {
  position: absolute;
  width: 0;
  height: 0;
}

button {
  display: inline-flex;
  align-items: center;
  justify-content: center;
  margin: 0;
  padding: 0;
  border: 0;
  background: none;
  color: inherit;
  font: inherit;
}

.icon {
  width: 16px;
  height: 16px;
  flex: none;
}

.arrow {
  width: 0;
  height: 0;
  flex: none;
  border: 3px solid transparent;
  border-top: 4px solid #77797c;
  border-bottom: 0;
}
.arrow.pale { border-top-color: #aaa; }

/* title */

.titlebar {
  display: flex;
  align-items: center;
  height: 30px;
  padding: 0 11px;
}
.title-left {
  flex: 1;
  display: flex;
}
.title-left .icon {
  padding-right: 4px;
  border-right: 1px solid #ccc;
}
h1 {
  margin: 0;
  font: 600 14px/30px Inter, "Noto Sans CJK SC", sans-serif;
  color: #333;
}
.window-buttons {
  flex: 1;
  display: flex;
  justify-content: flex-end;
  gap: 15px;
}
.window-buttons svg {
  width: 12px;
  height: 12px;
  fill: none;
  stroke: #555;
}

/* tabs */

.tabs {
  display: flex;
  align-items: flex-end;
  height: 32px;
  padding: 0 8px 0 4px;
}
.tab {
  box-sizing: border-box;
  width: 53px;
  height: 20px;
  padding-bottom: 3px;
  border-top: 1px solid #c4c6c9;
  border-right: 1px solid #d9dbde;
  background: #eeeff1;
  color: #75777b;
  font-size: 14px;
  font-weight: bold;
}
.tab.wide { width: 83px; }
.tab.file {
  width: 55px;
  margin-right: 8px;
  gap: 4px;
  border-left: 1px solid #c4c6c9;
  border-right-color: #c4c6c9;
}
.tab.active {
  position: relative;
  z-index: 1;
  height: 25px;
  margin-bottom: -1px;
  border: 1px solid #c4c6c9;
  border-bottom: 0;
  border-radius: 3px 3px 0 0;
  background: #fcfcfe;
  color: #333;
}
.help {
  display: flex;
  align-items: center;
  gap: 7px;
  height: 34px;
  margin-left: auto;
}
.help svg {
  width: 16px;
  height: 16px;
}
.help .learn { gap: 7px; }

/* ribbon */

.ribbon {
  display: flex;
  margin: -1px 4px 0;
  border: 1px solid #c4c6c9;
}
.group {
  display: flex;
  flex-direction: column;
  box-sizing: border-box;
  flex: none;
  border-right: 1px solid #d3d5d8;
}
.ops { width: 129px; }
.data { width: 107px; }
.comp { width: 150px; }
.datums { width: 151px; }
.cut { width: 82px; }
.modifier { width: 58px; }
.show { width: 267px; }
.intent { width: 203px; }
.check { width: 91px; }
.group.rest {
  flex: 1;
  border-right: 0;
}
.group-body {
  display: flex;
  gap: 5px;
  height: 75px;
  padding: 2px 0 0 3px;
}
.cut .group-body { padding-left: 16px; }
.modifier .group-body {
  padding-left: 0;
  justify-content: center;
}
.group-name {
  box-sizing: border-box;
  gap: 5px;
  height: 22px;
  padding-bottom: 1px;
  border-top: 1px solid #c4c6c9;
  background: #edeef0;
  white-space: nowrap;
}
.large {
  flex-direction: column;
  justify-content: flex-start;
  width: 36px;
  padding-top: 3px;
  line-height: 12px;
  white-space: nowrap;
}
.large.w54 { width: 54px; }
.large.w40 { width: 40px; }
.large svg {
  width: 32px;
  height: 32px;
  margin-bottom: 10px;
}
.large > .arrow { margin-top: 4px; }
.large span {
  display: flex;
  align-items: center;
  gap: 8px;
}
.stack {
  display: flex;
  flex-direction: column;
  margin: 0 2px;
}
.small {
  justify-content: flex-start;
  gap: 4px;
  height: 24px;
  white-space: nowrap;
}
.small .arrow { margin-left: 4px; }
button:disabled { color: #999b9e; }
button:disabled .arrow { border-top-color: #a9abae; }
.divider {
  width: 1px;
  margin: 6px 2px 18px;
  background: #dcdee0;
}

/* quick access */

.quickbar {
  display: flex;
  align-items: center;
  gap: 8px;
  height: 24px;
  padding-left: 12px;
}
.quick-sep {
  width: 1px;
  height: 22px;
  background: #ccc;
}
.redo {
  color: #aaa;
  transform: scaleX(-1);
}
.customize .arrow {
  border-width: 4px 4px 0;
  border-top-color: #333;
}
.customize {
  flex-direction: column;
  gap: 1px;
}
.customize::before {
  content: "";
  width: 8px;
  height: 1px;
  background: #333;
}

/* model tree */

.work {
  display: flex;
  flex: 1;
  padding-right: 4px;
}
.side {
  display: flex;
  flex-direction: column;
  box-sizing: border-box;
  flex: none;
  width: 260px;
  padding: 13px 2px 9px 4px;
}
.side-tabs {
  display: flex;
  height: 29px;
}
.side-tabs button {
  width: 30px;
  border: 1px solid #c4c6c9;
  border-left: 0;
  background: #edeef0;
}
.side-tabs .current {
  position: relative;
  width: 29px;
  border-left: 1px solid #c4c6c9;
  border-bottom-color: #fcfcfe;
  background: #fcfcfe;
}
.side-tabs svg {
  width: 20px;
  height: 18px;
}
.panel {
  flex: 1;
  margin-top: -1px;
  border: 1px solid #c4c6c9;
  border-right: 2px solid #c8cacd;
}
.panel-head {
  padding: 2px 6px 5px 4px;
  border-bottom: 1px solid #c4c6c9;
}
.head-row {
  display: flex;
  align-items: center;
  gap: 8px;
  height: 25px;
}
.head-row h2 {
  flex: 1;
  margin: 0 0 0 16px;
  font-size: 12px;
  line-height: 16px;
}
.head-row > button { gap: 7px; }
.head-row > button > svg {
  width: 18px;
  height: 20px;
}
.search-row {
  gap: 9px;
  padding-right: 4px;
}
.search-row > button > svg {
  width: 17px;
  height: 16px;
}
.search-row > button > .plus { width: 12px; }
.search {
  display: flex;
  box-sizing: border-box;
  flex: 1;
  height: 21px;
  padding-right: 4px;
  border: 1px solid #bfc1c4;
  background: #fff;
}
.search input {
  flex: 1;
  min-width: 0;
  padding: 0 4px;
  border: 0;
  outline: 0;
  background: none;
  font: inherit;
}
.search svg {
  width: 10px;
  height: 10px;
}
.tree {
  margin: 0;
  padding: 6px 0 0 31px;
  list-style: none;
  color: #4c4e51;
  font: 12px/24px "Noto Sans", sans-serif;
}
.tree li {
  display: flex;
  align-items: center;
  height: 24px;
}
.tree svg {
  width: 14px;
  height: 14px;
  margin-right: 4px;
}
.tree .root { margin-left: -20px; }
.packed {
  width: 3px;
  height: 5px;
  margin: 0 2px 6px 0;
  border: 1px solid #333;
}

/* graphics window */

.viewport {
  position: relative;
  flex: 1;
  background: linear-gradient(#c7dbea, #a9c2dd 24%, #83a3cb 55%, #5a7aa9);
}
.model {
  position: absolute;
  left: 280px;
  top: 104px;
  width: 350px;
}
.viewbar {
  position: absolute;
  left: 410px;
  top: 8px;
  display: flex;
  padding: 0 3px;
  border: 1px solid #d7e2ea;
  background: #eef2f5;
}
.viewbar button {
  box-sizing: border-box;
  width: 27px;
  height: 24px;
  border-right: 1px solid #cfd7dd;
  background: #fcfdfe;
}
.viewbar .pressed {
  border: 1px solid #8b9298;
  border-top-width: 2px;
  background: #e9ecee;
}
.viewbar svg {
  width: 18px;
  height: 18px;
}
.dialog {
  position: absolute;
  left: 639px;
  top: 21px;
  box-sizing: border-box;
  width: 304px;
  border: 2px solid #c9ccd0;
  padding: 1px 4px 3px;
  background: #eeeff1;
}
.dialog-title {
  display: flex;
  align-items: center;
  height: 19px;
  margin: 0 -4px;
  padding: 0 7px 0 17px;
  border-bottom: 1px solid #d8dadd;
  background: #f8f9fb;
  color: #a9abae;
}
.dialog-title span {
  flex: 1;
  text-align: center;
  font-size: 13px;
}
.dialog-title svg {
  width: 8px;
  height: 8px;
}
.dialog-tools {
  display: flex;
  height: 28px;
  margin-left: -3px;
}
.dialog-tools button {
  width: 28px;
}
.dialog-tools .pressed {
  box-sizing: border-box;
  border: 1px solid #b4b6b9;
  border-top: 2px solid #909295;
  background: #dfe1e3;
}
.dialog-tools svg {
  width: 22px;
  height: 22px;
}
.dialog-tools svg svg {
  width: 18px;
  height: 18px;
}
.snapshots {
  justify-content: flex-start;
  width: 100%;
  height: 16px;
  margin-top: 2px;
  padding-left: 7px;
  gap: 7px;
  background: #000080;
  color: #fff;
}
.snapshots i {
  border: 6px solid transparent;
  border-left-color: #fff;
  border-right: 0;
}
.dialog-foot {
  display: flex;
  justify-content: center;
  padding-top: 12px;
}
.dialog-foot button {
  width: 46px;
  height: 20px;
  border-radius: 3px;
  background: linear-gradient(#bfe2f8, #8fcbf2);
  font-weight: bold;
}
.tooltip {
  position: absolute;
  left: 163px;
  top: 74px;
  padding: 6px 7px;
  border: 1px solid #b2c7d5;
  background: #e4f1fa;
  line-height: 18px;
  white-space: nowrap;
}

/* taskbar */

.taskbar {
  display: flex;
  align-items: center;
  height: 39px;
  border-top: 1px solid #26384f;
  background:
    linear-gradient(rgba(255, 255, 255, .4), rgba(255, 255, 255, .1) 10%, rgba(30, 50, 80, 0) 40%, rgba(30, 50, 80, 0) 80%, rgba(30, 50, 80, .35)),
    radial-gradient(circle 12px at 1010px 23px, #4a6078, transparent),
    radial-gradient(circle 10px at 927px 19px, #87a5c5, transparent),
    radial-gradient(circle 10px at 957px 16px, #87a5c5, transparent),
    linear-gradient(90deg, #6d88aa, #8298b4 50px, #7f96b4 240px, #a3c1e2 290px, #abcbee 440px, #a4c5ea 980px, #7089a6 1030px, #7e91ab);
}
.start {
  width: 54px;
}
.start svg {
  width: 38px;
  height: 38px;
}
.pin {
  width: 60px;
}
.pin svg, .tasks svg {
  width: 32px;
  height: 32px;
}
.pin.blue { color: #3683e4; }
.grip {
  width: 9px;
  height: 30px;
  margin: 0 3px;
  background: radial-gradient(circle at 1px 1px, #24364d 1px, transparent 1px) 0 0 / 3px 4px;
}
.tasks {
  display: flex;
  gap: 4px;
  margin-left: 6px;
}
.tasks button {
  box-sizing: border-box;
  width: 58px;
  height: 38px;
  border: 1px solid transparent;
  border-radius: 3px;
}
.tasks .open {
  border-color: #2c415c;
  background: linear-gradient(135deg, #e3edf6, #adc2d8);
  box-shadow: inset 0 0 0 1px rgba(255, 255, 255, .6);
}
.tasks .stacked {
  padding-right: 7px;
  box-shadow: inset -4px 0 0 -1px #a9bfd5, inset -5px 0 0 -1px #2c415c, inset -8px 0 0 -1px #c4d5e5, inset -9px 0 0 -1px #2c415c;
}
.tasks .dim { background: linear-gradient(135deg, #c5dbf1, #9dbbdc); }
.tasks .alert { background: linear-gradient(90deg, rgba(255, 255, 255, 0), rgba(255, 252, 160, .4)), linear-gradient(#f8e06b, #f38a2c); }
.tasks .green { color: #56b52e; }
.tray {
  display: flex;
  align-items: center;
  height: 100%;
  margin-left: auto;
}
.tray button {
  width: 23px;
}
.tray svg {
  width: 16px;
  height: 16px;
}
.clock {
  display: flex;
  flex-direction: column;
  align-items: center;
  width: 117px;
  margin-left: 4px;
  color: #fff;
  font: 12px/18px "Open Sans", "Noto Sans CJK SC", sans-serif;
}
.tray .desktop {
  box-sizing: border-box;
  width: 15px;
  height: 100%;
  border: 1px solid #5f738d;
  background: linear-gradient(135deg, #cfdbe8, #8ba0ba);
}
.tray {
  position: relative;
  z-index: 2;
}

/* floating */

.speed {
  position: absolute;
  right: 216px;
  bottom: 45px;
  display: flex;
  align-items: center;
  box-sizing: border-box;
  width: 122px;
  height: 38px;
  padding-right: 4px;
  border-radius: 19px;
  background: linear-gradient(#fbfbfc, #dfe0e2);
  color: #222;
}
.ball {
  box-sizing: border-box;
  flex: none;
  width: 48px;
  height: 48px;
  margin-left: -4px;
  border: 2px solid #e4f5e9;
  border-radius: 50%;
  background: linear-gradient(#288c62, #107345 36%, #3fce57 37%, #45d25c);
  box-shadow: 0 0 1px 1px #77867e;
  color: #e5ffe9;
  text-align: center;
  font: 14px/42px "Liberation Sans", sans-serif;
}
.rates {
  flex: 1;
  padding-left: 4px;
  font: 10px/15px "Open Sans", sans-serif;
}
.rates div {
  display: flex;
  justify-content: space-between;
}
.rates b {
  font-family: "DejaVu Sans", sans-serif;
}
.up { color: #dd4b3d; }
.down { color: #2e8757; }
.speed svg {
  width: 20px;
  height: 20px;
  margin-left: 4px;
}
.watermark {
  position: absolute;
  right: 5px;
  bottom: 5px;
  display: flex;
  width: 206px;
  height: 62px;
  background: rgba(255, 255, 255, .18);
  pointer-events: none;
}
.watermark svg {
  width: 60px;
  height: 62px;
  opacity: .6;
}
.watermark div {
  display: flex;
  flex-direction: column;
  padding: 3px 0 0 8px;
}
.watermark strong {
  color: #388b79;
  font-size: 29px;
  line-height: 36px;
}
.watermark span {
  color: #6b92b9;
  font: 15px/20px "Liberation Sans", sans-serif;
}
</style>
